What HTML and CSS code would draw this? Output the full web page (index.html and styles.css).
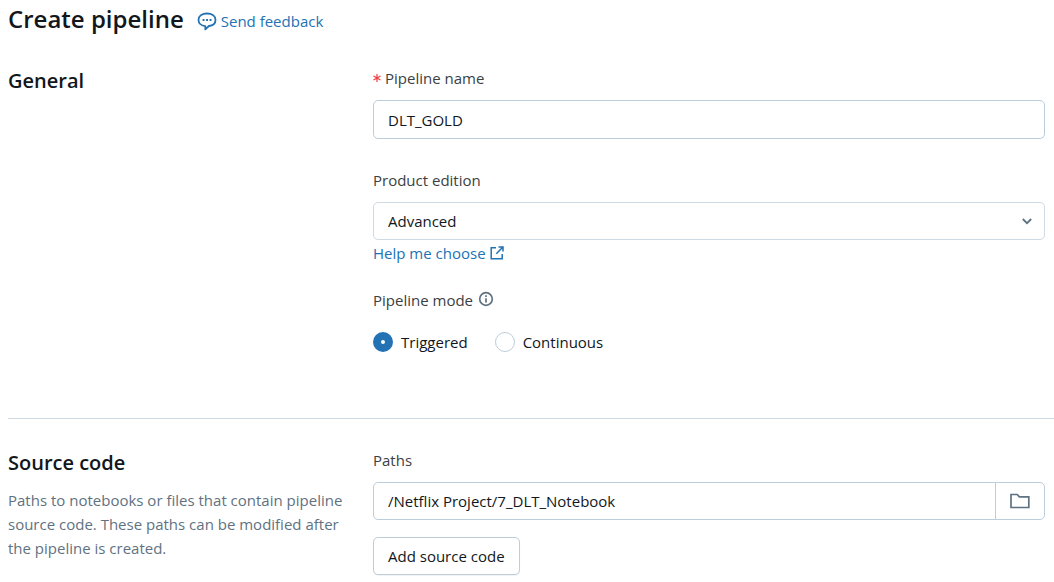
FILE: index.html
```html
<!DOCTYPE html>
<html lang="en">
<head>
<meta charset="utf-8">
<meta name="viewport" content="width=device-width, initial-scale=1">
<title>Create pipeline</title>
<link rel="stylesheet" href="styles.css">
</head>
<body>
<header class="page-header">
  <h1 class="page-title">Create pipeline</h1>
  <a class="link" href="#feedback">
    <svg class="icon-feedback" viewBox="0 0 20 20" width="20" height="20" fill="none" stroke="currentColor" stroke-width="1.8" stroke-linejoin="round" aria-hidden="true">
      <path d="M10 2.500C5 2.500 1.500 5.100 1.500 8.900C1.500 12.200 4.400 14.800 8.300 15.100V18.400L11.900 15C15.800 14.500 18.500 12.200 18.500 8.900C18.500 5.100 15 2.500 10 2.500Z"/>
      <path d="M5.600 9h1.900M9.100 9h1.900M12.600 9h1.900"/>
    </svg>
    <span>Send feedback</span>
  </a>
</header>
<form class="pipeline-form">
  <section class="section">
    <div class="section-intro">
      <h2 class="section-title">General</h2>
    </div>
    <div class="fields">
      <div class="field">
        <label class="label" for="name"><svg class="required" viewBox="0 0 8 8" width="8" height="8" stroke="currentColor" stroke-width="1.2" aria-hidden="true"><path d="M4 0V8M.5 2L7.500 6M.5 6L7.500 2"/></svg>Pipeline name</label>
        <input class="control control-name" id="name" type="text" value="DLT_GOLD" required>
      </div>
      <div class="field">
        <label class="label" for="edition">Product edition</label>
        <div class="select-wrap">
          <select class="control select" id="edition"><option>Advanced</option></select>
          <svg class="chevron" viewBox="0 0 10 7" width="10" height="7" fill="none" stroke="currentColor" stroke-width="1.800" aria-hidden="true"><path d="M.8 1L5 5.200L9.200 1"/></svg>
        </div>
        <a class="link link-help" href="#editions">
          <span>Help me choose</span>
          <svg viewBox="0 0 14 14" width="14" height="14" fill="none" stroke="currentColor" stroke-width="1.500" aria-hidden="true"><path d="M6 1.800H1.200V12.800H12.200V8M8.500 1H13V5.500M13 1L6.300 7.700"/></svg>
        </a>
      </div>
      <fieldset class="mode">
        <legend class="label">Pipeline mode
          <svg class="icon-info" viewBox="0 0 16 16" width="16" height="16" fill="none" stroke="currentColor" stroke-width="1.700" aria-hidden="true"><circle cx="8" cy="8" r="6.300"/><path d="M8 7.200V11.500M8 4.300V6"/></svg>
        </legend>
        <div class="options">
          <label class="option"><input class="radio" type="radio" name="mode" checked>Triggered</label>
          <label class="option"><input class="radio" type="radio" name="mode">Continuous</label>
        </div>
      </fieldset>
    </div>
  </section>
  <section class="section section-source">
    <div class="section-intro">
      <h2 class="section-title">Source code</h2>
      <p class="description">Paths to notebooks or files that contain pipeline source code. These paths can be modified after the pipeline is created.</p>
    </div>
    <div class="fields">
      <div>
        <label class="label" for="path">Paths</label>
        <div class="path-row">
          <input class="control path-input" id="path" type="text" value="/Netflix Project/7_DLT_Notebook">
          <button class="browse" type="button" aria-label="Browse files">
            <svg viewBox="0 0 20 16" width="20" height="16" fill="none" stroke="currentColor" stroke-width="1.700" aria-hidden="true"><path d="M1 1.500H7.300L9.300 3.800H18.800V14.500H1Z"/></svg>
          </button>
        </div>
        <button class="add" type="button">Add source code</button>
      </div>
    </div>
  </section>
</form>
</body>
</html>
```
FILE: styles.css
```css
* {
  box-sizing: border-box;
}

body {
  margin: 0;
  background: #fff;
  color: #11171c;
  font: 15px/24px "Segoe UI", "Open Sans", sans-serif;
}

input,
select,
button {
  font: inherit;
  color: inherit;
}

svg {
  flex: none;
}

.page-header {
  display: flex;
  align-items: center;
  gap: 13px;
  padding: 3px 8px;
}

.page-title,
.section-title {
  margin: 0;
  font-weight: 600;
}

.page-title {
  font-size: 24px;
  line-height: 32px;
}

.section-title {
  font-size: 20px;
  line-height: 28px;
}

.link {
  display: flex;
  align-items: center;
  gap: 4px;
  width: fit-content;
  color: #2272b4;
  text-decoration: none;
}

.page-header .link {
  padding-top: 4px;
}

.pipeline-form {
  padding-left: 8px;
}

.section {
  display: grid;
  grid-template-columns: 341px minmax(0, 1fr);
  column-gap: 24px;
  padding: 28px 9px 64px 0;
}

.section-intro {
  padding-top: 1px;
}

.section-source {
  border-top: 1px solid #cfdae3;
  padding-top: 29px;
  padding-bottom: 8px;
}

.description {
  margin: 11px 0 0;
  color: #5f7281;
}

.label {
  display: flex;
  align-items: center;
  margin-bottom: 10px;
  padding: 0;
  color: #3b3f43;
}

.required {
  margin-right: 4px;
  color: #f03e3e;
}

.control {
  display: block;
  width: 100%;
  height: 38px;
  padding: 0 14px;
  border: 1px solid #bccddb;
  border-radius: 5px;
  background: #fff;
}

.control-name {
  height: 39px;
}

.field {
  margin-bottom: 29px;
}

.field:nth-child(2) {
  margin-bottom: 23px;
}

.select-wrap {
  position: relative;
}

.select {
  appearance: none;
  border-color: #cfdae3;
}

.chevron {
  position: absolute;
  top: 16px;
  right: 13px;
  color: #5f7281;
  pointer-events: none;
}

.link-help {
  margin-top: 1px;
}

.mode {
  margin: 0;
  padding: 0;
  border: 0;
}

.icon-info {
  margin: 0 0 3px 5px;
  color: #5f7281;
}

.mode .label {
  margin-bottom: 18px;
}

.options {
  display: flex;
  gap: 27px;
}

.option {
  display: flex;
  align-items: center;
  gap: 8px;
}

.radio {
  appearance: none;
  width: 20px;
  height: 20px;
  margin: 0;
  border: 1px solid #bccddb;
  border-radius: 50%;
  background: #fff;
}

.radio:checked {
  border: 8px solid #2272b4;
}

.path-row {
  display: flex;
  margin-bottom: 17px;
}

.path-input {
  flex: 1;
  min-width: 0;
  border-radius: 5px 0 0 5px;
}

.browse {
  display: flex;
  align-items: center;
  justify-content: center;
  width: 50px;
  margin-left: -1px;
  padding: 0;
  border: 1px solid #bccddb;
  border-radius: 0 5px 5px 0;
  background: #fff;
  color: #5f7281;
}

.add {
  height: 38px;
  padding: 0 14px;
  border: 1px solid #bccddb;
  border-radius: 5px;
  background: #fff;
  box-shadow: 0 1px 1px #11171c0d;
}
```
